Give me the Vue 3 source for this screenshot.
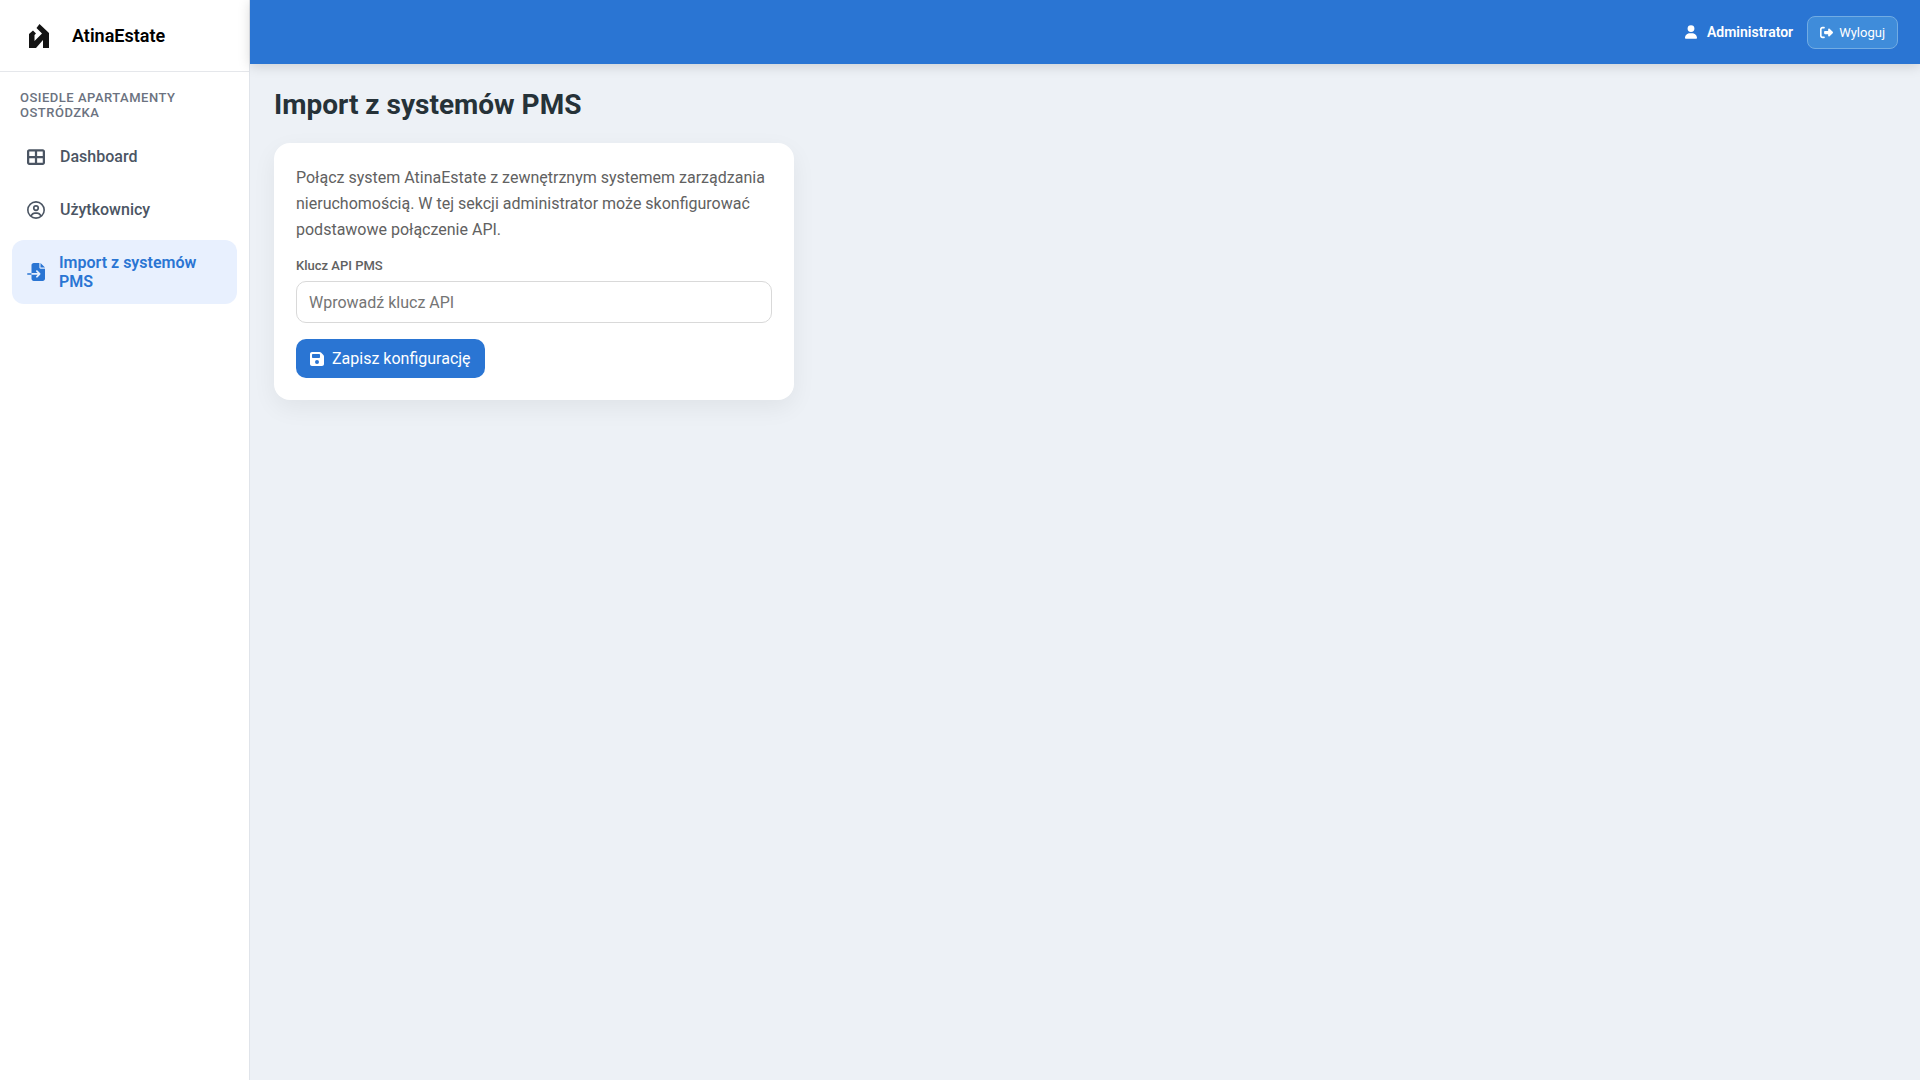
<script setup>
import { ref } from 'vue'

const apiKey = ref('')

const menuItems = [
  {
    id: 'dashboard',
    label: 'Dashboard',
    icon: 'M448 96V224H288V96H448zm0 192V416H288V288H448zM224 224H64V96H224V224zM64 288H224V416H64V288zM64 32C28.7 32 0 60.7 0 96V416c0 35.3 28.7 64 64 64H448c35.3 0 64-28.7 64-64V96c0-35.3-28.7-64-64-64H64z'
  },
  {
    id: 'users',
    label: 'Użytkownicy',
    icon: 'M406.5 399.6C387.4 352.9 341.5 320 288 320H224c-53.5 0-99.4 32.9-118.5 79.6C69.9 362.2 48 311.7 48 256C48 141.1 141.1 48 256 48s208 93.1 208 208c0 55.7-21.9 106.2-57.5 143.6zm-40.1 32.7C334.4 452.4 296.6 464 256 464s-78.4-11.6-110.5-31.7c7.3-36.7 39.7-64.3 78.5-64.3h64c38.8 0 71.2 27.6 78.5 64.3zM256 512A256 256 0 1 0 256 0a256 256 0 1 0 0 512zm0-272a40 40 0 1 1 0-80 40 40 0 1 1 0 80zm-88-40a88 88 0 1 0 176 0 88 88 0 1 0 -176 0z'
  },
  {
    id: 'pms',
    label: 'Import z systemów PMS',
    icon: 'M128 64c0-35.3 28.7-64 64-64H352V128c0 17.7 14.3 32 32 32H512V448c0 35.3-28.7 64-64 64H192c-35.3 0-64-28.7-64-64V336H302.1l-39 39c-9.4 9.4-9.4 24.6 0 33.9s24.6 9.4 33.9 0l80-80c9.4-9.4 9.4-24.6 0-33.9l-80-80c-9.4-9.4-24.6-9.4-33.9 0s-9.4 24.6 0 33.9l39 39H128V64zm0 224v48H24c-13.3 0-24-10.7-24-24s10.7-24 24-24H128zM512 128H384V0L512 128z'
  }
]

const activeItem = ref('pms')
</script>

<template>
  <div class="layout">
    <aside class="sidebar">
      <div class="brand">
        <svg class="brand-logo" viewBox="0 0 20 24" aria-hidden="true">
          <path d="M10.5 0 20 9v15h-6v-8l-7 8H0V10l4-3.500L7 9.500 5.500 11v6L13 9.500 7.500 4z" />
        </svg>
        <span class="brand-name">AtinaEstate</span>
      </div>

      <div class="sidebar-title">Osiedle Apartamenty Ostródzka</div>

      <nav class="menu">
        <a
          v-for="item in menuItems"
          :key="item.id"
          href="#"
          class="menu-item"
          :class="{ active: item.id === activeItem }"
          @click.prevent="activeItem = item.id"
        >
          <svg class="menu-icon" viewBox="0 0 512 512" aria-hidden="true">
            <path :d="item.icon" />
          </svg>
          <span>{{ item.label }}</span>
        </a>
      </nav>
    </aside>

    <div class="main">
      <header class="topbar">
        <div class="user">
          <svg class="user-icon" viewBox="0 0 448 512" aria-hidden="true">
            <path d="M224 256A128 128 0 1 0 224 0a128 128 0 1 0 0 256zm-45.7 48C79.8 304 0 383.8 0 482.3C0 498.7 13.3 512 29.7 512H418.3c16.4 0 29.7-13.3 29.7-29.7C448 383.8 368.2 304 269.7 304H178.3z" />
          </svg>
          <span>Administrator</span>
        </div>
        <button type="button" class="logout-button">
          <svg class="logout-icon" viewBox="0 0 512 512" aria-hidden="true">
            <path d="M377.9 105.9L500.7 228.7c7.2 7.2 11.3 17.1 11.3 27.3s-4.1 20.1-11.3 27.3L377.9 406.1c-6.4 6.4-15 9.9-24 9.9c-18.7 0-33.9-15.2-33.9-33.9l0-62.1-128 0c-17.7 0-32-14.3-32-32l0-64c0-17.7 14.3-32 32-32l128 0 0-62.1c0-18.7 15.2-33.9 33.9-33.9c9 0 17.6 3.6 24 9.9zM160 96L96 96c-17.7 0-32 14.3-32 32l0 256c0 17.7 14.3 32 32 32l64 0c17.7 0 32 14.3 32 32s-14.3 32-32 32l-64 0c-53 0-96-43-96-96L0 128C0 75 43 32 96 32l64 0c17.7 0 32 14.3 32 32s-14.3 32-32 32z" />
          </svg>
          Wyloguj
        </button>
      </header>

      <main class="content">
        <h1 class="page-title">Import z systemów PMS</h1>

        <form class="card" @submit.prevent>
          <p class="card-text">
            Połącz system AtinaEstate z zewnętrznym systemem zarządzania
            nieruchomością. W tej sekcji administrator może skonfigurować
            podstawowe połączenie API.
          </p>
          <label class="field-label" for="api-key">Klucz API PMS</label>
          <input
            id="api-key"
            v-model="apiKey"
            class="field-input"
            type="text"
            placeholder="Wprowadź klucz API"
          />
          <button type="submit" class="save-button">
            <svg class="save-icon" viewBox="0 0 448 512" aria-hidden="true">
              <path d="M64 32C28.7 32 0 60.7 0 96V416c0 35.3 28.7 64 64 64H384c35.3 0 64-28.7 64-64V173.3c0-17-6.7-33.3-18.7-45.3L352 50.7C340 38.7 323.7 32 306.7 32H64zm0 96c0-17.7 14.3-32 32-32H288c17.7 0 32 14.3 32 32v64c0 17.7-14.3 32-32 32H96c-17.7 0-32-14.3-32-32V128zM224 288a64 64 0 1 1 0 128 64 64 0 1 1 0-128z" />
            </svg>
            Zapisz konfigurację
          </button>
        </form>
      </main>
    </div>
  </div>
</template>

<style>
body {
  margin: 0;
  background: #edf1f6;
}
</style>

<style scoped>
.layout {
  display: flex;
  min-height: 100vh;
  background: #edf1f6;
  font-family: Roboto, sans-serif;
}

.layout * {
  box-sizing: border-box;
}

svg {
  flex-shrink: 0;
  fill: currentColor;
}

button,
input {
  font-family: inherit;
}

.sidebar {
  width: 250px;
  flex-shrink: 0;
  background: #ffffff;
  border-right: 1px solid #e0e4ea;
}

.brand {
  display: flex;
  align-items: center;
  gap: 23px;
  height: 72px;
  padding: 0 29px;
  border-bottom: 1px solid #e5e7eb;
}

.brand-logo {
  width: 20px;
  height: 24px;
  color: #141414;
}

.brand-name {
  font-size: 18px;
  font-weight: 600;
  color: #000000;
}

.sidebar-title {
  padding: 18px 20px 14px;
  font-size: 13px;
  font-weight: 500;
  line-height: 15px;
  letter-spacing: 0.5px;
  text-transform: uppercase;
  color: #6b7280;
}

.menu {
  display: flex;
  flex-direction: column;
  gap: 8px;
  padding: 0 12px;
}

.menu-item {
  display: flex;
  align-items: center;
  gap: 15px;
  padding: 13px 15px;
  border-radius: 12px;
  font-size: 16px;
  font-weight: 500;
  line-height: 19px;
  color: #4b5563;
  text-decoration: none;
}

.menu-item.active {
  gap: 14px;
  background: #e8f0fe;
  color: #2a75d3;
  font-weight: 600;
}

.menu-icon {
  width: 18px;
  height: 18px;
}

.main {
  flex: 1;
  min-width: 0;
}

.topbar {
  display: flex;
  align-items: center;
  justify-content: flex-end;
  gap: 14px;
  height: 64px;
  padding: 0 22px;
  background: #2a75d3;
  box-shadow: 0 2px 12px rgba(0, 0, 0, 0.15);
  color: #ffffff;
}

.user {
  display: flex;
  align-items: center;
  gap: 10px;
  font-size: 14px;
  font-weight: 600;
}

.user-icon {
  width: 12px;
  height: 14px;
}

.logout-button {
  display: flex;
  align-items: center;
  gap: 6px;
  height: 33px;
  padding: 0 12px;
  border: 1px solid #72ace3;
  border-radius: 8px;
  background: #3f8cda;
  color: #ffffff;
  font-size: 13px;
  cursor: pointer;
}

.logout-icon {
  width: 13px;
  height: 13px;
}

.content {
  padding: 24px;
}

.page-title {
  margin: 0 0 22px;
  font-size: 28px;
  font-weight: 700;
  line-height: 33px;
  color: #263238;
}

.card {
  max-width: 520px;
  padding: 22px;
  border-radius: 16px;
  background: #ffffff;
  box-shadow: 0 8px 24px rgba(0, 0, 0, 0.06);
}

.card-text {
  margin: 0 0 15px;
  font-size: 16px;
  line-height: 26px;
  color: #616161;
}

.field-label {
  display: block;
  margin-bottom: 8px;
  font-size: 13px;
  font-weight: 500;
  line-height: 15px;
  color: #616161;
}

.field-input {
  display: block;
  width: 100%;
  height: 42px;
  margin-bottom: 16px;
  padding: 0 12px;
  border: 1px solid #d9d9d9;
  border-radius: 10px;
  font-size: 16px;
  color: #263238;
}

.field-input::placeholder {
  color: #757575;
}

.save-button {
  display: flex;
  align-items: center;
  gap: 8px;
  height: 39px;
  padding: 0 14px;
  border: none;
  border-radius: 10px;
  background: #2a75d3;
  color: #ffffff;
  font-size: 16px;
  font-weight: 400;
  cursor: pointer;
}

.save-icon {
  width: 14px;
  height: 16px;
}
</style>
